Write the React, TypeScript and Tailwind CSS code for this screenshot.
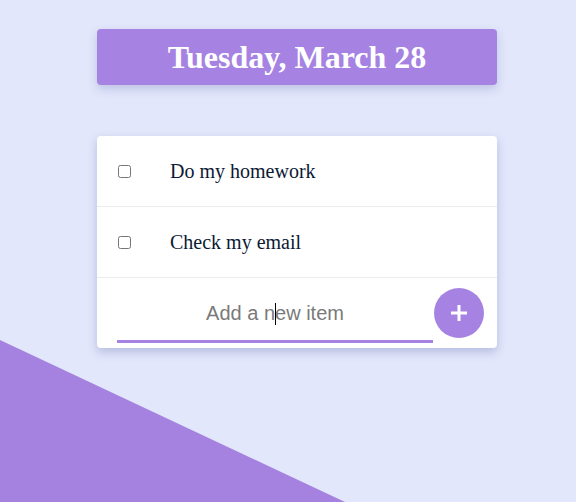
import React, { useState } from 'react';

const TODOS = ['Do my homework', 'Check my email'];

export default function App() {
  const [items] = useState<string[]>(TODOS);
  const [text, setText] = useState('');

  return (
    <div className="relative w-[576px] h-[502px] overflow-hidden bg-[#e2e7fb]">
      {/* Decorative corner triangle */}
      <svg className="absolute left-0 top-0" width="576" height="502" viewBox="0 0 576 502">
        <polygon points="0,340 345,502 0,502" fill="#a582e0" />
      </svg>

      <div className="relative flex flex-col pl-[97px] pt-[29px]">
        <div className="w-[400px] h-[56px] rounded bg-[#a683e2] shadow-[0_4px_10px_rgba(80,90,160,0.25)] flex items-center justify-center">
          <h1 className="text-white text-[32px] font-bold font-['Liberation_Serif',serif] leading-none">
            Tuesday, March 28
          </h1>
        </div>

        <div className="mt-[51px] w-[400px] bg-white rounded shadow-[0_4px_10px_rgba(80,90,160,0.3)]">
          {items.map(item => (
            <div key={item} className="h-[71px] flex items-center border-b border-[#ececec]">
              <input type="checkbox" className="ml-[21px] w-[13px] h-[13px]" />
              <span className="ml-[39px] text-[20px] text-[#0c1a33] font-['Liberation_Serif',serif]">
                {item}
              </span>
            </div>
          ))}
          <div className="h-[70px] flex items-end pl-[20px] pr-[12px] pb-[5px]">
            <div className="relative">
              <input
                value={text}
                onChange={e => setText(e.target.value)}
                placeholder="Add a new item"
                className="block w-[316px] h-[58px] pt-[2px] text-center text-[20px] font-['Liberation_Sans',sans-serif] text-gray-800 placeholder:text-[#7a7a7a] outline-none border-b-[3px] border-[#a683e2]"
              />
              {/* text caret */}
              {text === '' && (
                <span className="absolute left-[158px] top-[18px] w-px h-[22px] bg-black" />
              )}
            </div>
            <button className="ml-px mb-[5px] w-[50px] h-[50px] rounded-full bg-[#a683e2] flex items-center justify-center">
              <svg width="20" height="20" viewBox="0 0 20 20">
                <path d="M10 2v16M2 10h16" stroke="white" strokeWidth="3" />
              </svg>
            </button>
          </div>
        </div>
      </div>
    </div>
  );
}
